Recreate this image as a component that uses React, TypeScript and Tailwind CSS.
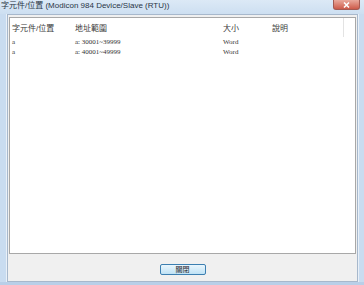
const font = { fontFamily: '"Liberation Sans", "Noto Sans CJK TC", sans-serif' };
const serif = { fontFamily: '"Liberation Serif", "Noto Sans CJK TC", serif' };

const rows = [
  { name: 'a', range: 'a: 30001~39999', size: 'Word', desc: '' },
  { name: 'a', range: 'a: 40001~49999', size: 'Word', desc: '' },
];

export default function App() {
  return (
    <div className="w-[364px] h-[285px] flex flex-col bg-[#c9dcf0] overflow-hidden" style={font}>
      {/* title bar */}
      <div className="h-[14px] flex items-start justify-between bg-gradient-to-b from-[#dce9f6] to-[#cddff1]">
        <span className="text-[8px] leading-[12px] pl-[1px] text-[#2a3646]">字元件/位置 (Modicon 984 Device/Slave (RTU))</span>
        <div className="w-[27px] h-[10px] mr-[4px] rounded-b-[3px] border border-t-0 border-[#a35a52] bg-gradient-to-b from-[#e9a99c] to-[#cc5a4a] flex items-center justify-center">
          <svg width="7" height="6" viewBox="0 0 7 6">
            <path d="M1 0.5 L6 5.5 M6 0.5 L1 5.5" stroke="#fff" strokeWidth="1.5" />
          </svg>
        </div>
      </div>

      <div className="flex-1 flex">
        <div className="w-[7px] border-r border-[#e9f0f8]" />
        <div className="flex-1 bg-[#f0f0f0] flex flex-col border border-[#a7b8cc]">
          {/* list view */}
          <div className="mt-[2px] ml-[1px] mr-[1px] h-[237px] bg-white border border-[#a8a8a8] flex flex-col">
            <div className="h-[19px] flex items-end pb-[3px] text-[8px] leading-[10px] text-[#3a3a3a] relative">
              <span className="w-[65px] pl-[2px]">字元件/位置</span>
              <span className="w-[148px]">地址範圍</span>
              <span className="w-[49px]">大小</span>
              <span>說明</span>
              <div className="absolute left-[333px] top-0 bottom-0 w-px bg-[#e3e3e3]" />
            </div>
            {rows.map((r, i) => (
              <div key={i} className="h-[10px] flex items-center text-[7px] leading-[10px] text-[#333]" style={serif}>
                <span className="w-[65px] pl-[2px]">{r.name}</span>
                <span className="w-[148px]">{r.range}</span>
                <span className="w-[49px]">{r.size}</span>
                <span>{r.desc}</span>
              </div>
            ))}
          </div>
          {/* footer */}
          <div className="flex-1 flex items-start justify-center pt-[10px]">
            <button className="w-[46px] h-[11px] rounded-[2px] border border-[#3c7fb1] bg-gradient-to-b from-[#eaf6fd] to-[#bfe2f5] text-[7px] leading-[9px] text-[#222] flex items-center justify-center">
              關閉
            </button>
          </div>
        </div>
        <div className="w-[6px] border-l border-[#e9f0f8]" />
      </div>
      <div className="h-[3px] bg-[#b9cfe8]" />
    </div>
  );
}
